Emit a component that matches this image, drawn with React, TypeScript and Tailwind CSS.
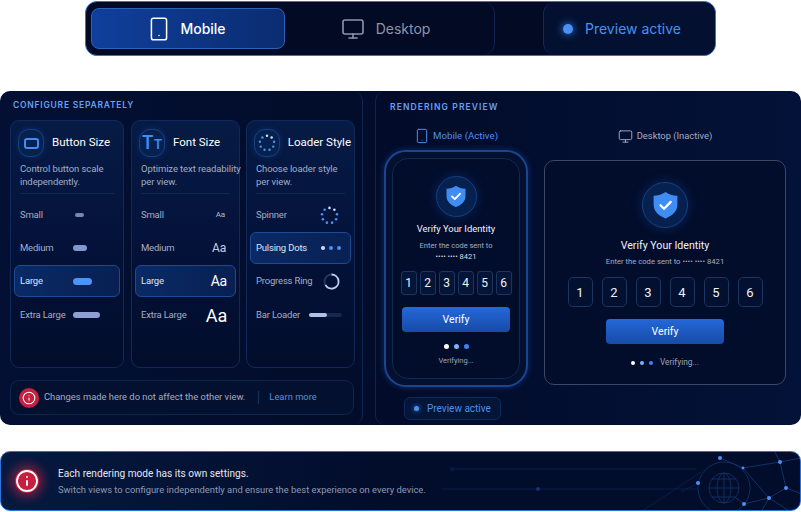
import { Info, Monitor, Smartphone } from "lucide-react";
import type { ReactNode } from "react";

const font = { fontFamily: "Roboto, 'Noto Sans', sans-serif" };

function Dot({ className }: { className: string }) {
  return <span className={`block rounded-full ${className}`} />;
}

function Spinner({ size }: { size: number }) {
  const dots = [0, 1, 2, 3, 4, 5, 6, 7, 8];
  return (
    <svg width={size} height={size} viewBox="0 0 20 20" aria-hidden="true">
      {dots.map((i) => {
        const a = (i / 9) * Math.PI * 2 - Math.PI / 2;
        return (
          <circle
            key={i}
            cx={10 + Math.cos(a) * 8}
            cy={10 + Math.sin(a) * 8}
            r={1.35}
            fill={i < 2 ? "#cfe0ff" : "#4a90f5"}
          />
        );
      })}
    </svg>
  );
}

function Shield({ size, circle }: { size: number; circle: string }) {
  return (
    <div
      className={`flex items-center justify-center rounded-full border border-[#15407f] bg-[#06214f] shadow-[0_0_12px_rgba(30,100,220,0.3)] ${circle}`}
    >
      <svg width={size} height={size * 1.13} viewBox="0 0 24 27" aria-hidden="true">
        <path
          d="M12 0.8 C15 3 19 4.2 23.4 4.4 V13 C23.4 19.5 18.6 23.8 12 26.4 C5.4 23.8 0.6 19.5 0.6 13 V4.4 C5 4.2 9 3 12 0.8 Z"
          fill="#3f8cf3"
        />
        <path d="M7.2 13.6 L10.6 17 L17 10.4" fill="none" stroke="#fff" strokeWidth="2.2" strokeLinecap="round" strokeLinejoin="round" />
      </svg>
    </div>
  );
}

function Row({ label, active, children }: { label: string; active?: boolean; children: ReactNode }) {
  return (
    <div
      className={`flex h-[32px] items-center rounded-[6px] border pl-[5px] text-[9.5px] tracking-[-0.02em] last:mt-[1px] ${
        active
          ? "border-[#1d4a94] bg-linear-to-r from-[#0a2a66] to-[#082052] text-[#dde5f5]"
          : "border-transparent text-[#a4aec4]"
      }`}
    >
      <span className="w-[53px] shrink-0 whitespace-nowrap">{label}</span>
      {children}
    </div>
  );
}

function Card({ icon, title, text, width, children }: { icon: ReactNode; title: string; text: ReactNode; width: string; children: ReactNode }) {
  return (
    <div className={`h-[248px] ${width} shrink-0 rounded-[9px] border border-[#0f2a5a] bg-linear-to-b from-[#061b45] via-[#04123a] to-[#020d2b] px-[3px] pt-[8px]`}>
      <div className="flex h-[28px] items-center gap-[8px] pl-[4px]">
        <div className="flex h-[28px] w-[26px] items-center justify-center rounded-[11px] border border-[#14407f] bg-[#07214f] shadow-[0_0_6px_rgba(30,100,220,0.25)]">{icon}</div>
        <span className="whitespace-nowrap text-[11.5px] text-white">{title}</span>
      </div>
      <p className="ml-[6px] mr-[6px] mt-[5px] box-content h-[27px] whitespace-nowrap border-b border-[#10294f] pb-[4px] text-[9.5px] leading-[13px] tracking-[-0.01em] text-[#a2adc4]">{text}</p>
      <div className="mt-[5px] flex flex-col gap-[1px]">{children}</div>
    </div>
  );
}

function Code({ n, box }: { n: number; box: string }) {
  return <div className={`flex items-center justify-center border border-[#1c3560] text-[#eef2fa] ${box}`}>{n}</div>;
}

function Verifying({ small }: { small?: boolean }) {
  const size = small ? "h-[4px] w-[4px]" : "h-[5px] w-[5px]";
  return (
    <div className="flex gap-[5px]">
      <Dot className={`${size} bg-white`} />
      <Dot className={`${size} bg-[#7fb0f8]`} />
      <Dot className={`${size} bg-[#3b82f6]`} />
    </div>
  );
}

function Network() {
  const nodes = [
    [719, 6],
    [742, 16],
    [779, 10],
    [697, 31],
    [785, 36],
    [768, 46],
    [743, 52],
  ];
  return (
    <svg className="absolute inset-0" width="801" height="60" viewBox="0 0 801 60" fill="none" aria-hidden="true">
      <g stroke="#0a2450" strokeWidth="0.8">
        <path d="M451 17 H695 M440 37 H697 M640 60 L700 20 M680 40 L697 31" />
        <circle cx="723" cy="36" r="26" stroke="#123670" />
        <circle cx="723" cy="36" r="15" stroke="#143568" />
        <ellipse cx="723" cy="36" rx="7" ry="15" stroke="#143568" />
        <path d="M708 36 H738 M711 27 H735 M711 45 H735 M723 21 V51" stroke="#143568" />
      </g>
      <g stroke="#153c7a" strokeWidth="0.8">
        <path d="M742 16 L779 10 L800 6 M779 10 L785 36 L768 46 L743 52 M742 16 L768 46 L790 60 M768 46 L760 60 M785 36 L801 42 M774 0 L779 10 M719 6 L742 16 M743 52 L735 46" />
      </g>
      <circle cx="451" cy="17" r="1.5" stroke="#0f2e62" strokeWidth="0.7" />
      <circle cx="537" cy="37" r="2" fill="#123672" />
      {nodes.map(([x, y]) => (
        <circle key={x} cx={x} cy={y} r={x === 742 ? 1.4 : 2} fill="#4a90f5" />
      ))}
    </svg>
  );
}

export default function App() {
  return (
    <div style={font} className="flex h-[512px] w-[801px] flex-col overflow-hidden bg-white pt-[1px]">
      {/* Mode switch */}
      <div className="ml-[85px] flex h-[55px] w-[631px] items-stretch rounded-[12px] border border-[#2f74d8] bg-[#020a24] font-['Inter']">
        <div className="flex w-[409px] items-center rounded-[12px] border-r border-[#0f2550] py-[6px] pl-[5px]">
          <div className="flex h-[41px] w-[194px] items-center justify-center gap-[8px] rounded-[8px] border border-[#2c62b8] bg-linear-to-r from-[#0f3f9c] to-[#0b2c70] pr-[4px] text-[14px] font-medium text-white">
            <Smartphone size={26} strokeWidth={1.4} />
            <span>Mobile</span>
          </div>
          <div className="flex flex-1 items-center justify-center gap-[11px] pr-[8px] text-[14px] text-[#8f95a8]">
            <Monitor size={24} strokeWidth={1.6} />
            <span>Desktop</span>
          </div>
        </div>
        <div className="ml-[48px] flex flex-1 items-center gap-[12px] rounded-[12px] border-l border-[#0f2a5c] bg-[#031030] pl-[19px]">
          <Dot className="h-[10px] w-[10px] bg-[#4a90f5] shadow-[0_0_8px_#3b82f6]" />
          <span className="text-[14px] text-[#4a90f0]">Preview active</span>
        </div>
      </div>

      {/* Main panel */}
      <div className="mt-[35px] flex h-[334px] w-full rounded-[10px] bg-linear-to-r from-[#031033] via-[#020c2a] to-[#031238]">
        <section className="w-[363px] shrink-0 rounded-[10px] border-r border-[#0e2550] pl-[10px]">
          <h2 className="pl-[3px] pt-[9px] font-['Inter'] text-[8.5px] leading-[11px] font-semibold tracking-[0.09em] text-[#6a9ff0]">CONFIGURE SEPARATELY</h2>
          <div className="mt-[9px] flex gap-[6px]">
            <Card
              width="w-[114px]"
              title="Button Size"
              text={<>Control button scale<br />independently.</>}
              icon={<span className="block h-[11px] w-[15px] rounded-[3px] border-[2px] border-[#3f8cf3]" />}
            >
              <Row label="Small"><span className="ml-[2px] block h-[4px] w-[9px] rounded-full bg-[#7486ba]" /></Row>
              <Row label="Medium"><span className="block h-[6px] w-[14px] rounded-full bg-[#8496cf]" /></Row>
              <Row label="Large" active><span className="block h-[7px] w-[19px] rounded-full bg-[#4a94fb]" /></Row>
              <Row label="Extra Large"><span className="block h-[6px] w-[27px] rounded-full bg-[#8d9fd6]" /></Row>
            </Card>
            <div className="ml-[1px]">
              <Card
                width="w-[109px]"
                title="Font Size"
                text={<>Optimize text readability<br />per view.</>}
                icon={
                  <span className="flex items-baseline font-['Inter'] font-semibold leading-none text-[#3f8cf3]">
                    <span className="text-[18px]">T</span>
                    <span className="text-[13px]">T</span>
                  </span>
                }
              >
                <Row label="Small"><span className="ml-auto pr-[10px] text-[8px] text-[#b4bccd]">Aa</span></Row>
                <Row label="Medium"><span className="ml-auto pr-[9px] text-[12px] text-[#c8d0e0]">Aa</span></Row>
                <Row label="Large" active><span className="ml-auto pr-[8px] text-[14px] text-white">Aa</span></Row>
                <Row label="Extra Large"><span className="ml-auto pr-[8px] text-[18px] text-white">Aa</span></Row>
              </Card>
            </div>
            <Card
              width="w-[109px]"
              title="Loader Style"
              text={<>Choose loader style<br />per view.</>}
              icon={<Spinner size={18} />}
            >
              <Row label="Spinner"><span className="ml-auto pr-[11px]"><Spinner size={19} /></span></Row>
              <Row label="Pulsing Dots" active>
                <span className="ml-auto flex gap-[4px] pr-[9px]">
                  <Dot className="h-[4px] w-[4px] bg-[#cfe0ff]" />
                  <Dot className="h-[4px] w-[4px] bg-[#4a90f5]" />
                  <Dot className="h-[4px] w-[4px] bg-[#4a90f5]" />
                </span>
              </Row>
              <Row label="Progress Ring">
                <span className="ml-auto pr-[10px]">
                  <svg width="17" height="17" viewBox="0 0 17 17" fill="none" aria-hidden="true">
                    <circle cx="8.5" cy="8.5" r="7" stroke="#26375f" strokeWidth="1.8" />
                    <path d="M8.5 1.5 A7 7 0 1 1 2.5 12" stroke="#c0cdf0" strokeWidth="1.8" />
                  </svg>
                </span>
              </Row>
              <Row label="Bar Loader">
                <span className="ml-auto mr-[8px] block h-[4px] w-[33px] rounded-full bg-[#14294f]">
                  <span className="block h-[4px] w-[18px] rounded-full bg-[#b0c0ea]" />
                </span>
              </Row>
            </Card>
          </div>
          <div className="mt-[12px] flex h-[35px] w-[344px] items-center rounded-[9px] border border-[#0e2550] bg-[#03102f] pl-[8px] text-[9.4px] text-[#a2adc4]">
            <span className="flex h-[20px] w-[20px] items-center justify-center rounded-full bg-[#c4203f] text-white">
              <Info size={14} strokeWidth={1.8} />
            </span>
            <span className="ml-[5px] whitespace-nowrap">Changes made here do not affect the other view.</span>
            <span className="ml-[13px] mr-[10px] h-[13px] w-px bg-[#123060]" />
            <span className="whitespace-nowrap text-[#4a90f0]">Learn more</span>
          </div>
        </section>

        <section className="ml-[12px] flex-1 rounded-[10px] border-l border-[#0e2550] pl-[8px]">
          <h2 className="pl-[6px] pt-[11px] font-['Inter'] text-[8.5px] leading-[11px] font-semibold tracking-[0.13em] text-[#6a9ff0]">RENDERING PREVIEW</h2>
          <div className="mt-[15px] flex items-start">
            <div className="flex w-[144px] flex-col items-center">
              <div className="flex h-[16px] items-center gap-[3px] text-[9.7px] text-[#4a90f0]">
                <Smartphone size={16} strokeWidth={1.5} />
                <span>Mobile (Active)</span>
              </div>
              <div className="mt-[6px] h-[237px] w-[144px] rounded-[22px] border-2 border-[#1a4590] bg-[#031030] p-[6px] shadow-[0_0_6px_rgba(40,110,230,0.35)]">
                <div className="flex h-full flex-col items-center rounded-[16px] border border-[#10294f] bg-[#020d2b] pt-[17px]">
                  <Shield size={20} circle="h-[41px] w-[41px]" />
                  <p className="mt-[5px] text-[9.4px] text-[#f0f3fa]">Verify Your Identity</p>
                  <p className="mt-[4px] text-center text-[7.5px] leading-[11px] text-[#a2adc4]">
                    Enter the code sent to
                    <br />
                    <span className="text-[#d5dbe8]">•••• •••• 8421</span>
                  </p>
                  <div className="mt-[9px] flex gap-[3px] text-[12px]">
                    {[1, 2, 3, 4, 5, 6].map((n) => (
                      <Code key={n} n={n} box="h-[24px] w-[16px] rounded-[3px] bg-[#051538]" />
                    ))}
                  </div>
                  <div className="mt-[12px] flex h-[25px] w-[108px] items-center justify-center rounded-[4px] bg-linear-to-b from-[#2468d8] to-[#174ba8] text-[10.5px] text-white">Verify</div>
                  <div className="mt-[12px]"><Verifying /></div>
                  <p className="mt-[6px] text-[7.5px] text-[#99a3b8]">Verifying...</p>
                </div>
              </div>
            </div>
            <div className="ml-[16px] flex w-[242px] flex-col items-center">
              <div className="flex h-[16px] items-center gap-[4px] text-[9.4px] text-[#a2adc4]">
                <Monitor size={15} strokeWidth={1.5} />
                <span>Desktop (Inactive)</span>
              </div>
              <div className="mt-[16px] flex h-[225px] w-[242px] flex-col items-center rounded-[10px] border border-[#3a4868] bg-[#020d2b] pt-[21px]">
                <Shield size={25} circle="h-[46px] w-[46px]" />
                <p className="mt-[10px] text-[10.6px] text-[#f0f3fa]">Verify Your Identity</p>
                <p className="mt-[2px] text-[7.7px] text-[#a2adc4]">Enter the code sent to •••• •••• 8421</p>
                <div className="mt-[10px] flex gap-[9px] text-[13px]">
                  {[1, 2, 3, 4, 5, 6].map((n) => (
                    <Code key={n} n={n} box="h-[30px] w-[25px] rounded-[5px] bg-[#031030]" />
                  ))}
                </div>
                <div className="mt-[12px] flex h-[25px] w-[118px] items-center justify-center rounded-[4px] bg-linear-to-b from-[#2468d8] to-[#174ba8] text-[10.5px] text-white">Verify</div>
                <div className="mt-[12px] flex items-center gap-[7px]">
                  <Verifying small />
                  <span className="text-[8.3px] text-[#99a3b8]">Verifying...</span>
                </div>
              </div>
            </div>
          </div>
          <div className="ml-[20px] mt-[10px] flex h-[23px] w-[97px] items-center gap-[8px] rounded-[6px] border border-[#0f2a5c] bg-[#041538] pl-[9px]">
            <Dot className="h-[5px] w-[5px] bg-[#4a90f5] shadow-[0_0_5px_#3b82f6]" />
            <span className="whitespace-nowrap text-[10px] text-[#4a90f0]">Preview active</span>
          </div>
        </section>
      </div>

      {/* Footer notice */}
      <div className="relative mt-[26px] flex h-[60px] w-full items-center overflow-hidden rounded-[10px] border border-[#2f74d8] bg-linear-to-r from-[#06193f] via-[#020c2b] to-[#020c2b] pl-[14px]">
        <Network />
        <span className="relative flex h-[24px] w-[24px] items-center justify-center rounded-full bg-[#c4203f] text-white shadow-[0_0_10px_5px_rgba(220,40,70,0.45)]">
          <Info size={24} strokeWidth={1.8} />
        </span>
        <div className="relative ml-[19px]">
          <p className="text-[10.15px] leading-[15px] text-[#e4e8f2]">Each rendering mode has its own settings.</p>
          <p className="mt-[2px] whitespace-nowrap text-[9.4px] leading-[13px] text-[#8f9ab2]">Switch views to configure independently and ensure the best experience on every device.</p>
        </div>
      </div>
    </div>
  );
}
